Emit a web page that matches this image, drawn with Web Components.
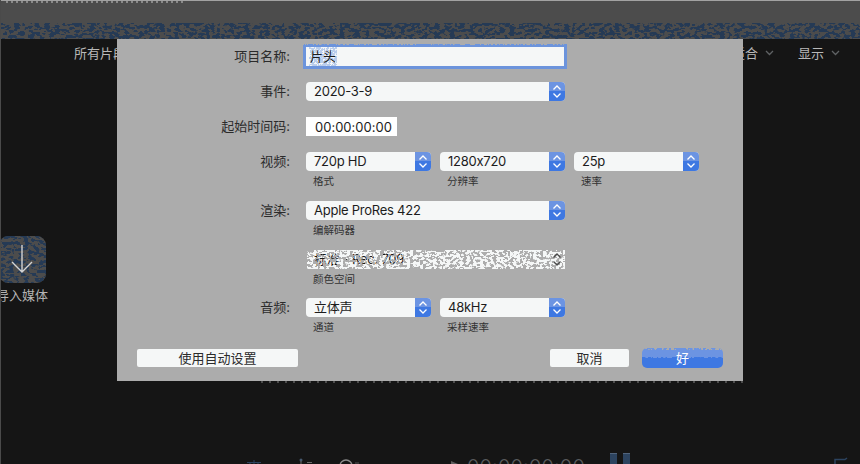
<!DOCTYPE html>
<html lang="zh">
<head>
<meta charset="utf-8">
<title>新建项目</title>
<style>
  html, body { margin: 0; height: 100%; background: #151515; }
  body { font: 13px Inter, "Noto Sans CJK SC", sans-serif; font-feature-settings: "calt" 0; overflow: hidden; }
</style>
</head>
<body>
<app-shell>
  <title-band slot="top"></title-band>
  <media-nav slot="nav"></media-nav>
  <import-tile slot="side"></import-tile>
  <transport-bar slot="bottom"></transport-bar>
  <project-dialog slot="sheet">
    <form-row label="项目名称:">
      <name-field value="片头"></name-field>
    </form-row>
    <form-row label="事件:">
      <mac-select value="2020-3-9" w="259"></mac-select>
    </form-row>
    <form-row label="起始时间码:">
      <time-field value="00:00:00:00"></time-field>
    </form-row>
    <form-row label="视频:" sub>
      <mac-select value="720p HD" w="125" note="格式"></mac-select>
      <mac-select value="1280x720" w="125" note="分辨率"></mac-select>
      <mac-select value="25p" w="125" note="速率"></mac-select>
    </form-row>
    <form-row label="渲染:" sub>
      <mac-select value="Apple ProRes 422" w="259" note="编解码器"></mac-select>
    </form-row>
    <form-row sub tight>
      <mac-select value="标准 - Rec. 709" w="258" note="颜色空间" disabled></mac-select>
    </form-row>
    <form-row label="音频:" sub>
      <mac-select value="立体声" w="125" note="通道"></mac-select>
      <mac-select value="48kHz" w="125" note="采样速率"></mac-select>
    </form-row>
    <mac-button slot="left" w="161">使用自动设置</mac-button>
    <mac-button slot="right" w="79">取消</mac-button>
    <mac-button slot="right" w="81" primary>好</mac-button>
  </project-dialog>
</app-shell>

<script>
let noiseId = 0;

// thresholded turbulence, stands in for the gif dither of the reference
class DitherNoise extends HTMLElement {
  constructor() {
    super();
    this.attachShadow({ mode: 'open' });
  }
  connectedCallback() {
    const id = 'n' + (++noiseId);
    const color = this.getAttribute('color') || '#253a55';
    const freq = this.getAttribute('freq') || '0.2 0.32';
    const cut = this.getAttribute('cut') || '-4.4';
    this.shadowRoot.innerHTML = `
      <style>
        :host { display: block; position: absolute; inset: 0; pointer-events: none; }
        svg { display: block; width: 100%; height: 100%; shape-rendering: crispEdges; }
      </style>
      <svg xmlns="http://www.w3.org/2000/svg">
        <filter id="${id}" x="0" y="0" width="100%" height="100%" color-interpolation-filters="sRGB">
          <feTurbulence type="fractalNoise" baseFrequency="${freq}" numOctaves="2" seed="${noiseId + 3}"/>
          <feColorMatrix values="0 0 0 0 0  0 0 0 0 0  0 0 0 0 0  20 0 0 0 ${cut}" result="m"/>
          <feFlood flood-color="${color}"/>
          <feComposite in2="m" operator="in"/>
        </filter>
        <rect width="100%" height="100%" filter="url(#${id})"/>
      </svg>`;
  }
}

class AppShell extends HTMLElement {
  constructor() {
    super();
    this.attachShadow({ mode: 'open' }).innerHTML = `
      <style>
        :host {
          display: flex;
          flex-direction: column;
          position: relative;
          width: 860px;
          height: 464px;
          box-sizing: border-box;
          border-left: 1px solid #4a4a4a;
          background: #151515;
          overflow: hidden;
        }
        .middle { flex: 1; display: flex; align-items: center; padding-top: 17px; }
      </style>
      <slot name="top"></slot>
      <slot name="nav"></slot>
      <div class="middle"><slot name="side"></slot></div>
      <slot name="bottom"></slot>
      <slot name="sheet"></slot>
    `;
  }
}

class TitleBand extends HTMLElement {
  constructor() {
    super();
    this.attachShadow({ mode: 'open' }).innerHTML = `
      <style>
        :host {
          display: block;
          height: 38px;
          margin-left: -1px;
          border-top: 1px solid #a2a2a2;
          background: #4c4c4c;
          position: relative;
        }
        .crumbs {
          height: 2px;
          margin-left: 6px;
          width: 180px;
          background: repeating-linear-gradient(90deg, #8a8a8a 0 2px, transparent 2px 5px);
        }
        .band { position: absolute; left: 0; right: 0; top: 22px; height: 16px; }
      </style>
      <div class="crumbs"></div>
      <div class="band"><dither-noise color="#253a55" cut="-9.6"></dither-noise></div>
    `;
  }
}

class MediaNav extends HTMLElement {
  constructor() {
    super();
    const chev = `<svg width="9" height="6" viewBox="0 0 9 6"><path d="M1 1l3.5 3.5L8 1" fill="none" stroke="#5f6264" stroke-width="1.3"/></svg>`;
    this.attachShadow({ mode: 'open' }).innerHTML = `
      <style>
        :host {
          display: flex;
          justify-content: space-between;
          align-items: center;
          height: 27px;
          padding: 0 20px 3px 73px;
          color: #b9b9b9;
          font-size: 13px;
        }
        .right { display: flex; gap: 24px; }
        .item { display: flex; align-items: center; gap: 7px; }
      </style>
      <div class="item">所有片段</div>
      <div class="right">
        <div class="item">适合 ${chev}</div>
        <div class="item">显示 ${chev}</div>
      </div>
    `;
  }
}

class ImportTile extends HTMLElement {
  constructor() {
    super();
    this.attachShadow({ mode: 'open' }).innerHTML = `
      <style>
        :host {
          display: flex;
          flex-direction: column;
          align-items: center;
          gap: 3px;
          width: 52px;
          margin-left: -5px;
          color: #b4b4b4;
          font-size: 13px;
          line-height: 18px;
        }
        .tile {
          position: relative;
          width: 47px;
          height: 47px;
          border-radius: 9px;
          background: #4c4c4c;
          overflow: hidden;
        }
        svg { position: absolute; left: 10px; top: 8px; }
      </style>
      <div class="tile">
        <dither-noise color="#253a55" cut="-9.8"></dither-noise>
        <svg width="26" height="30" viewBox="0 0 26 30">
          <path d="M13 1v27M3 18l10 10 10-10" fill="none" stroke="#d4d4d4" stroke-width="1.4"/>
        </svg>
      </div>
      <div>导入媒体</div>
    `;
  }
}

class TransportBar extends HTMLElement {
  constructor() {
    super();
    this.attachShadow({ mode: 'open' }).innerHTML = `
      <style>
        :host {
          display: flex;
          align-items: flex-start;
          height: 11px;
          flex: none;
          overflow: hidden;
          color: #5a5c5e;
        }
        svg { display: block; flex: none; }
        .code {
          margin: 3px 0 0 9px;
          font: 300 20px/22px Inter, sans-serif;
          letter-spacing: .2px;
          white-space: nowrap;
        }
        .meter { display: flex; gap: 6px; margin-left: 25px; }
        .meter i { display: block; width: 7px; height: 11px; background: #2c435f; border-top: 1px solid #51647c; box-sizing: border-box; }
      </style>
      <svg width="14" height="11" viewBox="0 0 14 11" style="margin-left:246px"><path d="M0 9.5h14M7 7v4M3 9v2M11 9v2" stroke="#2c435f" fill="none"/></svg>
      <svg width="14" height="11" viewBox="0 0 14 11" style="margin-left:37px"><circle cx="3" cy="7" r="1.5" fill="#46586e"/><path d="M3 8v3M9 9.5h5" stroke="#6a6a6a"/></svg>
      <svg width="22" height="11" viewBox="0 0 22 11" style="margin-left:26px"><circle cx="8" cy="13" r="6" fill="none" stroke="#8a8a8a" stroke-width="1.4"/><path d="M17 10h4" stroke="#555"/></svg>
      <svg width="7" height="11" viewBox="0 0 7 11" style="margin-left:91px"><path d="M0 8l7 3H0z" fill="#5c5c5c"/></svg>
      <div class="code">00:00:00:00</div>
      <div class="meter"><i></i><i></i></div>
      <svg width="14" height="11" viewBox="0 0 14 11" style="margin-left:204px"><path d="M1 11V6.5h10l2-1.5" fill="none" stroke="#2c435f" stroke-width="1.5"/></svg>
    `;
  }
}

class ProjectDialog extends HTMLElement {
  constructor() {
    super();
    this.attachShadow({ mode: 'open' }).innerHTML = `
      <style>
        :host {
          display: flex;
          flex-direction: column;
          position: absolute;
          left: 116px;
          top: 39px;
          width: 626px;
          height: 342px;
          box-sizing: border-box;
          padding-top: 8px;
          background: #acacac;
          color: #2b2b2b;
        }
        .rows { display: grid; gap: 12px; }
        .foot {
          display: flex;
          justify-content: space-between;
          align-items: center;
          margin-top: 13px;
          padding: 0 20px;
        }
        .group { display: flex; gap: 13px; align-items: center; }
        .ticks {
          position: absolute;
          left: 144px;
          right: 0;
          bottom: -2px;
          height: 2px;
          background: repeating-linear-gradient(90deg, #4c4c4c 0 2px, transparent 2px 8px);
        }
      </style>
      <div class="rows"><slot></slot></div>
      <div class="foot">
        <div class="group"><slot name="left"></slot></div>
        <div class="group"><slot name="right"></slot></div>
      </div>
      <div class="ticks"></div>
    `;
  }
}

class FormRow extends HTMLElement {
  constructor() {
    super();
    this.attachShadow({ mode: 'open' });
  }
  connectedCallback() {
    const hasSub = this.hasAttribute('sub');
    const tall = this.hasAttribute('tight') ? 36 : 37;
    this.shadowRoot.innerHTML = `
      <style>
        :host {
          display: grid;
          grid-template-columns: 173px 1fr;
          column-gap: 16px;
          height: ${hasSub ? tall : 23}px;
        }
        .label { text-align: right; line-height: 19px; white-space: nowrap; font-size: 13px; }
        .fields { display: flex; align-items: flex-start; }
      </style>
      <div class="label">${this.getAttribute('label') || ''}</div>
      <div class="fields"><slot></slot></div>
    `;
  }
}

class NameField extends HTMLElement {
  constructor() {
    super();
    this.attachShadow({ mode: 'open' });
  }
  connectedCallback() {
    this.shadowRoot.innerHTML = `
      <style>
        :host {
          display: block;
          position: relative;
          box-sizing: border-box;
          width: 258px;
          height: 19px;
          background: #f5f7f7;
          outline: 3px solid #6c94dc;
          line-height: 19px;
          color: #1c1c1c;
        }
        .sel { display: inline-block; position: relative; margin-left: 3px; padding: 0 1px; background: #b9cdec; }
        .sel b { position: relative; font-weight: 400; }
        .rim { position: absolute; left: -3px; right: -3px; top: -4px; height: 2px; }
      </style>
      <div class="rim"><dither-noise color="#acacac" freq="0.5 0.6" cut="-10"></dither-noise></div>
      <span class="sel"><dither-noise color="#f5f7f7" freq="0.5" cut="-10"></dither-noise><b>${this.getAttribute('value')}</b></span>
    `;
  }
}

class TimeField extends HTMLElement {
  constructor() {
    super();
    this.attachShadow({ mode: 'open' });
  }
  connectedCallback() {
    this.shadowRoot.innerHTML = `
      <style>
        :host {
          display: block;
          box-sizing: border-box;
          width: 91px;
          height: 19px;
          padding-left: 9px;
          background: #fff;
          line-height: 20px;
          font-size: 13px;
          color: #1c1c1c;
          white-space: nowrap;
        }
      </style>
      ${this.getAttribute('value')}
    `;
  }
}

class MacSelect extends HTMLElement {
  constructor() {
    super();
    this.attachShadow({ mode: 'open' });
  }
  connectedCallback() {
    const w = +this.getAttribute('w');
    const note = this.getAttribute('note');
    const off = this.hasAttribute('disabled');
    // columns of a multi-select row start 134px apart
    const slotW = w < 200 ? 134 : w;
    const stroke = off ? '#4a4a4a' : '#fff';
    this.shadowRoot.innerHTML = `
      <style>
        :host { display: block; flex: none; width: ${slotW}px; }
        .box {
          position: relative;
          display: flex;
          width: ${w}px;
          height: 19px;
          box-sizing: border-box;
          border-radius: ${off ? 0 : '4px'};
          background: #f5f7f7;
          margin-left: ${off ? '1px' : 0};
          line-height: 19px;
          color: #1c1c1c;
          overflow: hidden;
        }
        .value { flex: 1; padding-left: ${off ? 7 : 8}px; white-space: nowrap; letter-spacing: -.25px; }
        .step {
          width: 16px;
          flex: none;
          background: ${off ? 'transparent' : 'linear-gradient(#6c94e2 0 45%, #3e78e2 45%)'};
          position: relative;
          z-index: 1;
        }
        svg { display: block; }
        .note { padding: 4px 0 0 7px; font-size: 10.5px; line-height: 14px; color: #333; white-space: nowrap; }
      </style>
      <div class="box">
        <div class="value">${this.getAttribute('value')}</div>
        ${off ? '<dither-noise color="#acacac" freq="0.3 0.4" cut="-9.8"></dither-noise>' : ''}
        <div class="step">
          <svg width="16" height="19" viewBox="0 0 16 19">
            <path d="M4.5 7.5L8 4l3.5 3.5M4.5 11.5L8 15l3.5-3.5" fill="none" stroke="${stroke}" stroke-width="1.3"/>
          </svg>
        </div>
      </div>
      ${note ? `<div class="note">${note}</div>` : ''}
    `;
  }
}

class MacButton extends HTMLElement {
  constructor() {
    super();
    this.attachShadow({ mode: 'open' });
  }
  connectedCallback() {
    const primary = this.hasAttribute('primary');
    this.shadowRoot.innerHTML = `
      <style>
        :host {
          display: block;
          position: relative;
          box-sizing: border-box;
          width: ${this.getAttribute('w')}px;
          height: ${primary ? 20 : 18}px;
          border-radius: ${primary ? 5 : 2}px;
          background: ${primary ? 'linear-gradient(#6c94e2 0 45%, #3e78e2 45%)' : '#f5f7f7'};
          color: ${primary ? '#fff' : '#2b2b2b'};
          text-align: center;
          line-height: ${primary ? 20 : 18}px;
          font-size: 13px;
          overflow: hidden;
        }
        span { position: relative; }
        .top, .seam { position: absolute; left: 0; right: 0; }
        .top { top: 0; height: 2px; }
        .seam { top: 8px; height: 2px; }
      </style>
      ${primary ? `<div class="top"><dither-noise color="#acacac" freq="0.4" cut="-10"></dither-noise></div>
      <div class="seam"><dither-noise color="#6c94e2" freq="0.3 0.6" cut="-10"></dither-noise></div>` : ''}
      <span><slot></slot></span>
    `;
  }
}

customElements.define('dither-noise', DitherNoise);
customElements.define('title-band', TitleBand);
customElements.define('media-nav', MediaNav);
customElements.define('import-tile', ImportTile);
customElements.define('transport-bar', TransportBar);
customElements.define('form-row', FormRow);
customElements.define('name-field', NameField);
customElements.define('time-field', TimeField);
customElements.define('mac-select', MacSelect);
customElements.define('mac-button', MacButton);
customElements.define('project-dialog', ProjectDialog);
customElements.define('app-shell', AppShell);
</script>
</body>
</html>
